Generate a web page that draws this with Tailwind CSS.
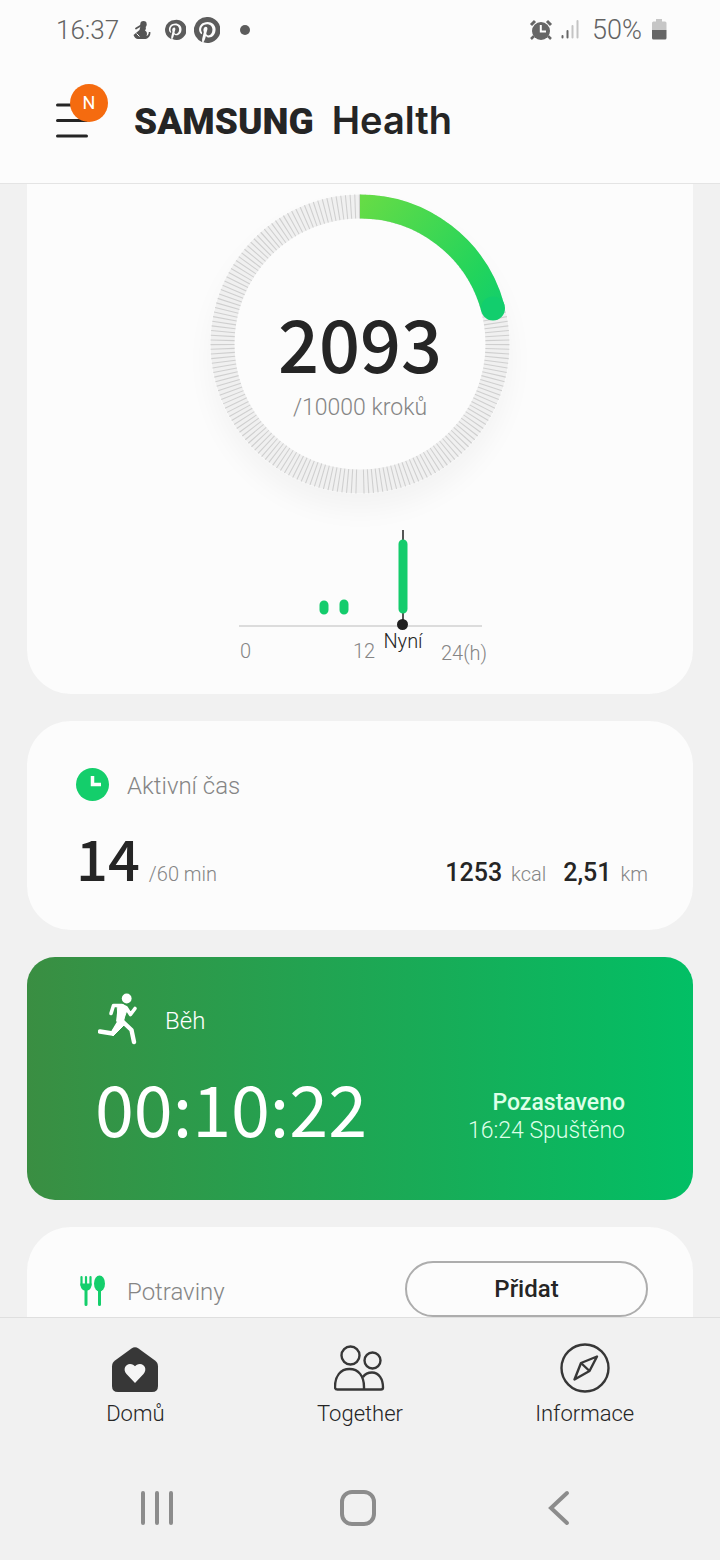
<!DOCTYPE html>
<html lang="cs">
<head>
<meta charset="utf-8">
<meta name="viewport" content="width=device-width, initial-scale=1">
<title>Samsung Health</title>
<script src="https://cdn.jsdelivr.net/npm/@tailwindcss/browser@4"></script>
</head>
<body class="flex h-screen flex-col overflow-hidden bg-[#f1f1f1] font-[Roboto,sans-serif] text-[#252525]">

<header class="shrink-0 border-b border-[#e4e4e4] bg-[#fcfcfc]">
  <!-- Status bar -->
  <div class="flex h-[59px] items-center justify-between pr-[53px] pl-14 text-[#636363]">
    <div class="flex items-center">
      <span class="w-[62px] text-[26px] leading-8 font-light">16:37</span>
      <svg class="ml-[15px] size-[18px]" viewBox="0 0 18 18" fill="#555"><circle cx="10.5" cy="3.2" r="3.2"/><path d="M7.500 5H12c1.500 1.500 1 3.500 0 4.500 2 1 2.500 3 1.500 5.500 1.500-.5 2.300-2 2.300-4h1.600c.3 4-2 6.500-4.900 7H5c-2 0-3.500-1.500-4.500-4L6.500 9z"/><path d="m3 7.500 5-3" stroke="#555" stroke-width="1.800" stroke-linecap="round"/><path d="m3.500 12.500 3 3" stroke="#fcfcfc" stroke-width="1"/></svg>
      <svg class="ml-[13px] size-[22px]" viewBox="0 0 24 24"><path fill="#5c5c5c" d="M12 1a11 11 0 0 0-4 21.200c-.1-.9-.2-2.200 0-3.200l1.300-5.500s-.3-.7-.3-1.600c0-1.500.9-2.700 2-2.700.9 0 1.400.7 1.400 1.600 0 .9-.6 2.300-.9 3.600-.3 1.100.5 1.900 1.600 1.900 1.900 0 3.400-2 3.400-5 0-2.600-1.900-4.400-4.500-4.400-3.100 0-4.900 2.300-4.900 4.700 0 .9.400 1.900.8 2.500l-.3 1.200c-1.500-.7-2.200-2.300-2.200-4 0-3.200 2.500-6.300 7.100-6.300 3.700 0 6.600 2.600 6.600 6.100 0 3.700-2.300 6.600-5.500 6.600-1.100 0-2.100-.6-2.500-1.200l-.7 2.600c-.2.900-.9 2.100-1.300 2.800A11 11 0 1 0 12 1"/></svg>
      <svg class="ml-2 size-[26px]" viewBox="0 0 24 24"><path fill="#5c5c5c" d="M12 0a12 12 0 0 0-4.400 23.200c-.1-.9-.2-2.400 0-3.400l1.500-6s-.4-.7-.4-1.800c0-1.700 1-2.900 2.200-2.900 1 0 1.500.8 1.500 1.700 0 1-.7 2.600-1 4-.3 1.200.6 2.200 1.800 2.200 2.100 0 3.800-2.300 3.800-5.500 0-2.900-2.100-4.900-5-4.900-3.400 0-5.400 2.600-5.400 5.200 0 1 .4 2.100.9 2.700l-.3 1.400c-1.700-.8-2.500-2.600-2.500-4.200 0-3.600 2.800-7 7.900-7 4.100 0 7.300 2.900 7.300 6.800 0 4.100-2.600 7.400-6.200 7.400-1.200 0-2.300-.6-2.700-1.400l-.8 2.800c-.3 1-1 2.300-1.500 3.100A12 12 0 1 0 12 0"/></svg>
      <span class="ml-5 size-[10px] rounded-full bg-[#5c5c5c]"></span>
    </div>
    <div class="flex items-center">
      <svg class="h-[22px] w-6" viewBox="0 0 24 22"><circle cx="12" cy="12" r="9" fill="#666"/><path d="M2 6 6 2M22 6l-4-4" stroke="#666" stroke-width="3"/><path d="m5 17-3 3m17-3 3 3" stroke="#666" stroke-width="2.500"/><path d="M11.800 6v6.500H17" fill="none" stroke="#fff" stroke-width="2"/></svg>
      <svg class="ml-2 h-[19px] w-[18px]" viewBox="0 0 18 19" stroke-width="2" stroke-linecap="round"><path d="M1.500 16v1.500M6.500 11v6.500" stroke="#666"/><path d="M11.500 6v11.500M16.500 1v16.500" stroke="#c4c4c4"/></svg>
      <span class="ml-[13px] w-[52px] text-[27px] leading-8 font-light">50%</span>
      <svg class="ml-2 h-[21px] w-[15px]" viewBox="0 0 15 21"><path d="M4 0h6v2.500h3a1.500 1.500 0 0 1 1.500 1.500v7H0V4a1.500 1.500 0 0 1 1.500-1.500H4z" fill="#c6c6c6"/><path d="M0 11h14.500v8a1.500 1.500 0 0 1-1.500 1.500H1.500A1.500 1.500 0 0 1 0 19z" fill="#666"/></svg>
    </div>
  </div>
  <!-- App bar -->
  <div class="flex h-[124px] items-center pl-14">
    <button type="button" aria-label="Menu" class="relative h-[38px] w-[52px]">
      <svg class="h-[38px] w-8" viewBox="0 0 32 38" stroke="#252525" stroke-width="3" stroke-linecap="round"><path d="M1.500 3h29M1.500 18.500h29M1.500 34h29"/></svg>
      <span class="absolute -top-[18px] right-0 flex size-[38px] items-center justify-center rounded-full bg-[#f56b0f] text-lg leading-5 text-white">N</span>
    </button>
    <h1 class="ml-[26px] flex items-baseline gap-[18px] leading-[38px]">
      <span class="text-[37px] font-black">SAMSUNG</span>
      <span class="font-[Inter] text-[38px] font-semibold">Health</span>
    </h1>
  </div>
</header>

<main class="flex min-h-0 flex-1 flex-col gap-7 overflow-hidden px-[27px]">
  <!-- Steps -->
  <section class="flex shrink-0 flex-col items-center rounded-b-[44px] bg-[#fcfcfc] pt-[10px] pb-6">
    <div class="grid size-[300px] place-items-center rounded-full shadow-[0_16px_28px_rgba(0,0,0,0.04)]">
      <svg class="size-[300px] [grid-area:1/1]" viewBox="0 0 300 300" fill="none">
        <defs><linearGradient id="arc" gradientUnits="userSpaceOnUse" x1="150" y1="10" x2="290" y2="120"><stop stop-color="#65dc46"/><stop offset=".75" stop-color="#22d45c"/><stop offset="1" stop-color="#12ce6d"/></linearGradient></defs>
        <circle cx="150" cy="150" r="137.500" stroke="#f0f0f0" stroke-width="24"/>
        <path d="M150 12.500A137.500 137.500 0 0 1 150 287.500" stroke="#cfcfcf" stroke-width="24" pathLength="400" stroke-dasharray="1 3"/>
        <path d="M150 12.500A137.500 137.500 0 0 0 150 287.500" stroke="#cfcfcf" stroke-width="24" pathLength="400" stroke-dasharray="1 3"/>
        <path d="M150 12.500A137.500 137.500 0 0 1 283 114.500" stroke="url(#arc)" stroke-width="24"/>
        <circle cx="283" cy="114.500" r="12" fill="#12ce6d"/>
      </svg>
      <div class="flex flex-col items-center [grid-area:1/1]">
        <strong class="mt-10 font-['Noto_Sans_CJK_JP',sans-serif] text-[72px] leading-[76px] font-medium">2093</strong>
        <span class="mt-3 text-[23px] leading-8 font-light text-[#858585]">/10000 kroků</span>
      </div>
    </div>
    <svg class="mt-[26px] h-[150px] w-[280px]" viewBox="0 0 280 150" role="img" aria-label="Kroky za den">
      <path d="M19 106h243" stroke="#dcdcdc" stroke-width="2"/>
      <path d="M183 10v94" stroke="#555" stroke-width="2"/>
      <path d="M104 85v5M124 84v6M183 24v65" stroke="#14cc6c" stroke-width="9" stroke-linecap="round"/>
      <circle cx="182.500" cy="104.500" r="5.500" fill="#202020"/>
      <g font-size="20" fill="#858585" class="font-light">
        <text x="20" y="138">0</text><text x="133" y="138">12</text><text x="221" y="140">24(h)</text>
        <text x="183" y="128" text-anchor="middle" fill="#252525">Nyní</text>
      </g>
    </svg>
  </section>

  <!-- Active time -->
  <section class="-mt-px shrink-0 rounded-[44px] bg-[#fcfcfc] pt-[45px] pr-[45px] pb-[42px] pl-[49px]">
    <h2 class="flex items-center gap-[18px] text-2xl leading-9 font-light text-[#858585]">
      <svg class="size-[33px]" viewBox="0 0 33 33"><circle cx="16.500" cy="16.500" r="16.500" fill="#14ce6b"/><path d="M16.500 8v8.500H25" fill="none" stroke="#fff" stroke-width="3.500"/></svg>
      <span class="pt-1 leading-8">Aktivní čas</span>
    </h2>
    <div class="mt-6 flex h-[62px] items-baseline">
      <strong class="font-['Noto_Sans_CJK_JP',sans-serif] text-[56px] leading-[62px] font-medium">14</strong>
      <span class="ml-[9px] text-xl font-light text-[#858585]">/60 min</span>
      <span class="ml-auto text-[25px] font-medium">1253</span>
      <span class="ml-[9px] text-xl font-light text-[#858585]">kcal</span>
      <span class="ml-[17px] text-[25px] font-medium">2,51</span>
      <span class="ml-[9px] text-xl font-light text-[#858585]">km</span>
    </div>
  </section>

  <!-- Paused workout -->
  <section class="-mt-px shrink-0 rounded-[28px] bg-linear-to-r/srgb from-[#3a8e42] to-[#02bf65] px-17 pt-9 pb-[53px] text-white">
    <h2 class="flex items-center text-2xl leading-[52px] font-light">
      <svg class="ml-[3px] h-[52px] w-10" viewBox="0 0 40 52" fill="none" stroke="#fff" stroke-linecap="round" stroke-linejoin="round"><circle cx="28.700" cy="5.500" r="4.900" fill="#fff" stroke="none"/><path d="M13 20.500 15.500 12.500H24l4 2 4.500 7L37 15.500" stroke-width="3.600"/><path d="M19.500 12h6.500l3 5-3.500 10 .5 5-11 11-2-3 7-11z" fill="#fff" stroke-width="1"/><path d="M23.500 16 22 29" stroke-width="8" stroke-linecap="butt"/><path d="m22 28-7.500 12.500L2 38.500M24 28l9.500 9 2.500 12" stroke-width="4.400"/></svg>
      <span class="ml-[27px] pt-1 leading-8">Běh</span>
    </h2>
    <div class="mt-[22px] flex items-center justify-between">
      <time class="font-['Noto_Sans_CJK_JP',sans-serif] text-[70px] leading-20 font-normal">00:10:22</time>
      <p class="mt-5 text-right text-[23px] leading-7 font-light text-[#ddffe8]"><strong class="block font-medium">Pozastaveno</strong>16:24 Spuštěno</p>
    </div>
  </section>

  <!-- Food -->
  <section class="-mt-px flex h-[180px] shrink-0 items-start justify-between rounded-t-[44px] bg-[#fcfcfc] pt-[34px] pr-[45px] pl-[53px]">
    <h2 class="flex items-center gap-[21px] pt-[11px] text-2xl leading-9 font-light text-[#858585]">
      <svg class="h-[31px] w-[26px]" viewBox="0 0 26 31" fill="none" stroke="#14ce6b" stroke-linecap="round"><path d="M1.500 2v8M6 2v8M10.500 2v8" stroke-width="2.200"/><path d="M.4 8.500h11.200c0 4-1.200 6.500-4 7h-3c-3-.5-4.200-3-4.200-7" fill="#14ce6b" stroke="none"/><path d="M6 14v15.500M19.500 13v16.500" stroke-width="3"/><ellipse cx="19.500" cy="8.500" rx="5.500" ry="8" fill="#14ce6b" stroke="none"/></svg>
      <span class="pt-1 leading-8">Potraviny</span>
    </h2>
    <button type="button" class="h-14 w-[243px] rounded-full border-2 border-[#adadad] text-2xl leading-8 font-medium">Přidat</button>
  </section>
</main>

<footer class="shrink-0 border-t border-[#dfdfdf] bg-[#f1f1f1]">
  <nav class="grid grid-cols-3 pt-[25px] pr-[23px] pl-[23px] text-center text-[22px] leading-8 font-light">
    <a href="#domu" class="flex flex-col items-center gap-[5px]">
      <svg class="size-[50px]" viewBox="0 0 50 50"><path d="M21.500 5.500q3.500-2.500 7 0L45 17.500q3 2.200 3 6V43q0 6-6 6H8q-6 0-6-6V23.500q0-3.800 3-6z" fill="#373737"/><path d="m25 40-8.500-9c-4-4.500-1-10 3.500-10 2.500 0 4 1 5 2.300 1-1.300 2.500-2.300 5-2.300 4.500 0 7.500 5.500 3.500 10z" fill="#f5f5f5"/></svg>
      Domů
    </a>
    <a href="#together" class="flex flex-col items-center gap-[5px]">
      <svg class="h-[50px] w-13" viewBox="0 0 52 50" fill="none" stroke="#373737" stroke-width="2.400"><circle cx="16.500" cy="12.500" r="9"/><circle cx="38.500" cy="17.500" r="8"/><path d="M3.500 46.500q-2.500 0-2.500-2.500c0-11 5.500-18 14.500-18S30 33 30 44v2.500M3.500 46.500H47q2 0 2-2C49 36 45 29.500 38 29.500c-4 0-7 1.500-9 4.500"/></svg>
      Together
    </a>
    <a href="#informace" class="flex flex-col items-center gap-[5px]">
      <svg class="size-[50px]" viewBox="0 0 50 50" fill="none" stroke="#373737" stroke-width="2.400" stroke-linejoin="round"><circle cx="25" cy="25" r="23.500"/><path d="m37 13.500-16 6.500-6.500 16.500L29.500 28z"/><path d="m21 20 8.500 8"/></svg>
      Informace
    </a>
  </nav>
  <!-- System navigation -->
  <div class="mt-[54px] grid h-[76px] grid-cols-3 pt-[5px] pr-[60px] pl-14">
    <button type="button" aria-label="Poslední aplikace" class="flex justify-center"><svg class="h-[38px] w-9" viewBox="0 0 36 38" stroke="#8c8c8c" stroke-width="4" stroke-linecap="round"><path d="M4 4v30M18 4v30M32 4v30"/></svg></button>
    <button type="button" aria-label="Plocha" class="flex justify-center"><svg class="size-[38px]" viewBox="0 0 38 38"><rect x="3" y="3" width="32" height="32" rx="10" fill="none" stroke="#8c8c8c" stroke-width="4"/></svg></button>
    <button type="button" aria-label="Zpět" class="flex justify-center"><svg class="h-[38px] w-6" viewBox="0 0 24 38" fill="none" stroke="#8c8c8c" stroke-width="4" stroke-linecap="round"><path d="M20 4 4 19l16 15"/></svg></button>
  </div>
</footer>
</body>
</html>
